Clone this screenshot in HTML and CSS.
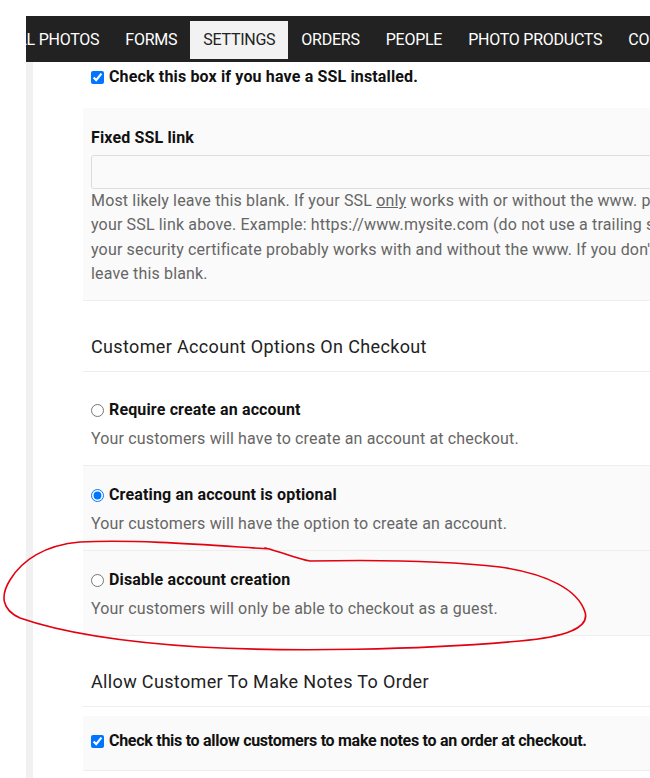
FILE: index.html
```html
<html>

<head>
  <title>Settings</title>
  <link rel="stylesheet" href="styles.css">
</head>

<body>

  <div class="topbar"></div>

  <div class="shell">
    <nav class="tabs">
      <ul>
        <li>ALL PHOTOS</li>
        <li>FORMS</li>
        <li class="active">SETTINGS</li>
        <li>ORDERS</li>
        <li>PEOPLE</li>
        <li>PHOTO PRODUCTS</li>
        <li>COUPONS</li>
      </ul>
    </nav>

    <div class="page">
      <div class="rail"></div>
      <main>
        <div class="row plain first">
          <label class="opt"><input type="checkbox" checked> Check this box if you have a SSL installed.</label>
        </div>

        <div class="row field">
          <div class="opt">Fixed SSL link</div>
          <input class="text" type="text">
          <p class="help">Most likely leave this blank. If your SSL <u>only</u> works with or without the www. put<br>
            your SSL link above. Example: https://www.mysite.com (do not use a trailing slash). Otherwise<br>
            your security certificate probably works with and without the www. If you don't know,<br>
            leave this blank.</p>
        </div>

        <h2>Customer Account Options On Checkout</h2>

        <div class="row plain">
          <label class="opt"><input type="radio" name="acct"> Require create an account</label>
          <p class="help">Your customers will have to create an account at checkout.</p>
        </div>
        <div class="row">
          <label class="opt"><input type="radio" name="acct" checked> Creating an account is optional</label>
          <p class="help">Your customers will have the option to create an account.</p>
        </div>
        <div class="row">
          <label class="opt"><input type="radio" name="acct"> Disable account creation</label>
          <p class="help">Your customers will only be able to checkout as a guest.</p>
        </div>

        <h2>Allow Customer To Make Notes To Order</h2>

        <div class="row short">
          <label class="opt tight"><input type="checkbox" checked> Check this to allow customers to make notes to an order at checkout.</label>
        </div>
      </main>
    </div>
  </div>

  <!-- red marker drawn over the screenshot -->
  <svg class="marker" width="650" height="778" viewBox="0 0 650 778">
    <path d="M270 549 C220 546 140 539 80 542 C45 545 22 560 10 580 C0 596 2 610 20 618
             C60 632 120 642 200 647 C290 652 420 650 520 641 C565 637 590 628 585 612
             C578 590 548 574 500 567 C440 560 360 560 310 561 C295 558 285 553 265 548"
      fill="none" stroke="#e3000f" stroke-width="1.6" stroke-linecap="round" />
  </svg>

</body>

</html>
```

FILE: styles.css
```css
body {
  margin: 0;
  font-family: Roboto, "Liberation Sans", sans-serif;
  color: #111;
  position: relative;
  overflow: hidden;
}

.topbar {
  height: 16px;
}

.shell {
  margin-left: 26px;
}

.tabs {
  background-color: #222;
  height: 46px;
  overflow: hidden;
}

.tabs ul {
  list-style: none;
  margin: 0 0 0 -31px;
  padding: 5px 0 0;
  display: flex;
  white-space: nowrap;
}

.tabs li {
  padding: 0 13px;
  line-height: 38px;
  font-size: 16px;
  letter-spacing: -0.25px;
  color: #fff;
}

.tabs li.active {
  background-color: #f2f2f2;
  color: #222;
}

.page {
  display: flex;
}

.rail {
  width: 7px;
  flex: none;
  background-color: #f1f1f1;
}

main {
  flex: 1;
  padding-left: 50px;
  min-height: 720px;
}

.row {
  padding: 17px 8px 13.7px;
  background-color: #fafafa;
  border-bottom: 1px solid #eee;
}

.row.plain {
  background-color: #fff;
}

.row.first {
  padding: 3px 8px 19px;
  border-bottom: none;
}

.row.field {
  padding: 18px 8px 14px;
}

.row.short {
  padding: 13px 8px 17px;
}

.opt {
  display: flex;
  align-items: center;
  font-size: 16px;
  font-weight: bold;
  line-height: 24px;
  letter-spacing: 0.15px;
  white-space: nowrap;
}

.opt.tight {
  letter-spacing: -0.28px;
}

.opt input {
  width: 13px;
  height: 13px;
  margin: 0 5px 0 0;
  accent-color: #0075ff;
}

.text {
  display: block;
  width: 600px;
  height: 34px;
  margin-top: 5px;
  box-sizing: border-box;
  border: 1px solid #ddd;
  border-radius: 3px;
  background-color: #fafafa;
}

.help {
  margin: 5px 0 0;
  font-size: 16px;
  line-height: 24.3px;
  color: #666;
  letter-spacing: 0.16px;
  white-space: nowrap;
}

.field .help {
  margin-top: 0;
}

h2 {
  margin: 33px 0 9px;
  padding: 0 8px 11px;
  font-size: 18px;
  font-weight: normal;
  line-height: 26px;
  letter-spacing: 0.35px;
  color: #222;
  border-bottom: 1px solid #eee;
}

.marker {
  position: absolute;
  top: 0;
  left: 0;
  pointer-events: none;
}
```
